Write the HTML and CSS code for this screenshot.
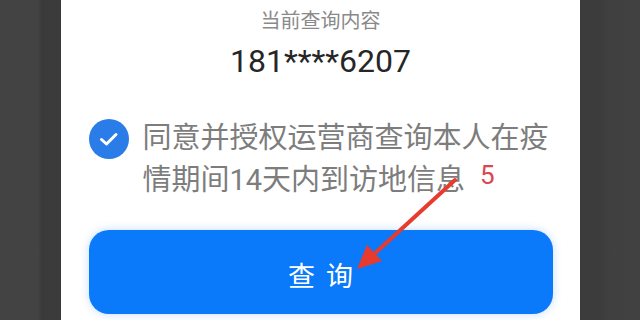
FILE: index.html
```html
<!DOCTYPE html>
<html lang="zh">
<head>
<meta charset="utf-8">
<link rel="stylesheet" href="styles.css">
</head>
<body>
<div class="page">
  <div class="side side-left"></div>
  <main class="panel">
    <div class="label">当前查询内容</div>
    <div class="phone">181****6207</div>
    <div class="agree">
      <span class="check">
        <svg width="40" height="40" viewBox="0 0 40 40"><circle cx="20" cy="20" r="20" fill="#2a7ce9"/><path d="M12.5 20.5 L17.5 25 L27 15.5" fill="none" stroke="#fff" stroke-width="3" stroke-linecap="round" stroke-linejoin="round"/></svg>
      </span>
      <p class="agree-text"><span class="line">同意并授权运营商查询本人在疫</span><span class="line">情期间14天内到访地信息</span></p>
    </div>
    <button class="query">查询</button>
  </main>
  <div class="side side-right"></div>
  <span class="step">5</span>
  <svg class="arrow" width="640" height="320" viewBox="0 0 640 320">
    <line x1="455" y1="180" x2="372" y2="256" stroke="#e63b2e" stroke-width="4" stroke-linecap="round"/>
    <polygon points="357,269 367,245 382,261" fill="#e63b2e"/>
  </svg>
</div>
</body>
</html>
```

FILE: styles.css
```css
html, body {
  margin: 0;
  padding: 0;
  width: 640px;
  height: 320px;
  overflow: hidden;
}
.page {
  position: relative;
  display: flex;
  width: 640px;
  height: 320px;
  font-family: "Roboto", "Noto Sans CJK SC", sans-serif;
}
.side {
  flex: 0 0 auto;
  height: 100%;
}
.side-left {
  width: 61px;
  background: linear-gradient(to right, #434343 0, #434343 38px, #3a3a3a 42px, #3b3b3b 61px);
}
.side-right {
  width: 60px;
  background: linear-gradient(to right, #3c3c3c 0, #3c3c3c 20px, #404040 30px, #414141 60px);
}
.panel {
  flex: 1 1 auto;
  background: #fff;
  display: flex;
  flex-direction: column;
  align-items: center;
  padding-top: 9px;
}
.label {
  font-size: 20px;
  line-height: 24px;
  color: #8a8a8a;
}
.phone {
  margin-top: 8px;
  font-size: 32px;
  line-height: 40px;
  color: #262626;
}
.agree {
  margin-top: 36px;
  width: 464px;
  display: flex;
  align-items: flex-start;
  gap: 14px;
}
.check {
  flex: 0 0 40px;
  height: 40px;
  margin-top: 2px;
  display: block;
}
.check svg {
  display: block;
}
.agree-text {
  margin: 0;
  display: flex;
  flex-direction: column;
  align-items: flex-start;
  font-size: 29px;
  line-height: 42px;
  color: #7d7d7d;
}
.line {
  display: block;
  white-space: nowrap;
}
.query {
  margin-top: 29px;
  width: 464px;
  height: 84px;
  border: none;
  border-radius: 20px;
  background: #0a79fa;
  color: #fff;
  font-family: "Noto Sans CJK SC", sans-serif;
  font-size: 27px;
  letter-spacing: 11px;
  padding: 4px 0 0 11px;
  box-shadow: 0 0 8px rgba(10, 121, 250, 0.25);
}
.step {
  position: absolute;
  left: 480px;
  top: 158px;
  font-size: 26px;
  line-height: 34px;
  color: #d9474f;
}
.arrow {
  position: absolute;
  left: 0;
  top: 0;
  pointer-events: none;
}
```
